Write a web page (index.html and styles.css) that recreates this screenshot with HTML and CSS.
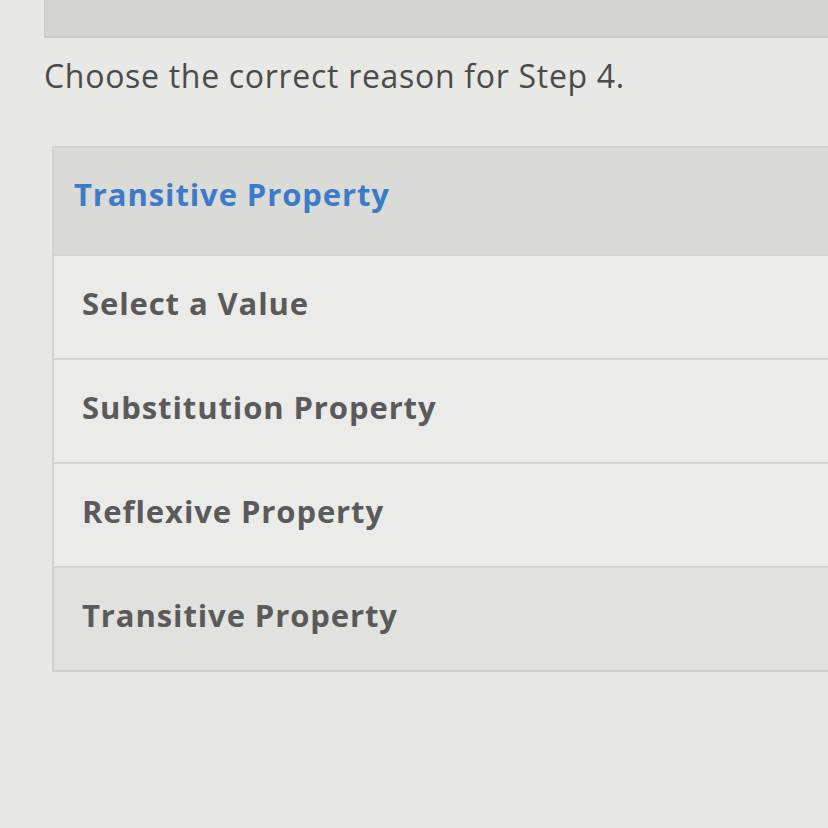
FILE: index.html
```html
<!DOCTYPE html>
<html>
<head>
<meta charset="utf-8">
<link rel="stylesheet" href="styles.css">
</head>
<body>
<div class="topbar"></div>
<p class="question">Choose the correct reason for Step 4.</p>
<div class="dropdown">
  <div class="option selected">Transitive Property</div>
  <div class="option">Select a Value</div>
  <div class="option">Substitution Property</div>
  <div class="option">Reflexive Property</div>
  <div class="option hover">Transitive Property</div>
</div>
</body>
</html>
```
FILE: styles.css
```css
html, body {
  margin: 0;
  padding: 0;
}
body {
  background: #e8e8e5;
  font-family: "Open Sans", "Noto Sans", sans-serif;
  width: 828px;
  height: 828px;
  overflow: hidden;
}
.topbar {
  margin-left: 44px;
  height: 36px;
  background: #d4d4d1;
  border-bottom: 2px solid #c9c9c6;
  border-left: 1px solid #cbcbc8;
}
.question {
  margin: 16px 0 0 44px;
  font-size: 32px;
  line-height: 44px;
  color: #4b4b4b;
  letter-spacing: 0.7px;
}
.dropdown {
  margin: 48px 0 0 52px;
  border-top: 2px solid #d0d0cd;
  border-left: 2px solid #d2d2cf;
  display: flex;
  flex-direction: column;
}
.option {
  height: 104px;
  box-sizing: border-box;
  display: flex;
  align-items: center;
  padding-left: 28px;
  padding-bottom: 8px;
  font-size: 31px;
  font-weight: 700;
  color: #5a5a5a;
  background: #ebebe9;
  border-bottom: 2px solid #d3d3d0;
  letter-spacing: 0.9px;
}
.option.selected {
  background: #dadad7;
  color: #3b7bc9;
  height: 108px;
  padding-left: 20px;
  padding-bottom: 14px;
}
.option.hover {
  background: #e1e1de;
  border-bottom-color: #cfcfcc;
}
```
